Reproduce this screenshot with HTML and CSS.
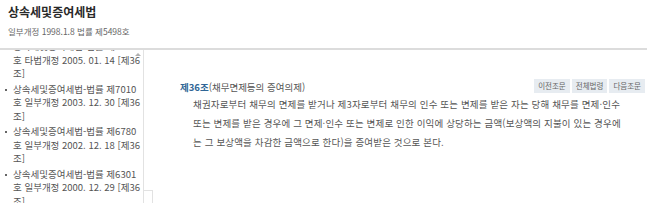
FILE: index.html
```html
<!DOCTYPE html>
<html lang="ko">
<head>
<meta charset="utf-8">
<link rel="stylesheet" href="styles.css">
</head>
<body>
<header class="head">
  <h1 class="title">상속세및증여세법</h1>
  <p class="sub">일부개정 1998.1.8 법률 제5498호</p>
</header>
<main class="main">
  <aside class="side">
    <div class="scroll">
      <ul class="hist">
        <li>상속세및증여세법-법률 제7335호 타법개정 2005. 01. 14 [제36조]</li>
        <li>상속세및증여세법-법률 제7010호 일부개정 2003. 12. 30 [제36조]</li>
        <li>상속세및증여세법-법률 제6780호 일부개정 2002. 12. 18 [제36조]</li>
        <li>상속세및증여세법-법률 제6301호 일부개정 2000. 12. 29 [제36조]</li>
      </ul>
      <span class="arrow"></span>
    </div>
  </aside>
  <section class="content">
    <div class="art-head">
      <h2 class="art-title"><span class="art-no">제36조</span>(채무면제등의 증여의제)</h2>
      <div class="btns">
        <span class="btn">이전조문</span>
        <span class="btn">전체법령</span>
        <span class="btn">다음조문</span>
      </div>
    </div>
    <p class="art-body">채권자로부터 채무의 면제를 받거나 제3자로부터 채무의 인수 또는 변제를 받은 자는 당해 채무를 면제·인수 또는 변제를 받은 경우에 그 면제·인수 또는 변제로 인한 이익에 상당하는 금액(보상액의 지불이 있는 경우에는 그 보상액을 차감한 금액으로 한다)을 증여받은 것으로 본다.</p>
  </section>
</main>
</body>
</html>
```

FILE: styles.css
```css
* { box-sizing: border-box; }
html, body { margin: 0; padding: 0; background: #fff; }
body {
  width: 647px;
  height: 203px;
  overflow: hidden;
  font-family: "Noto Sans CJK KR", "Noto Sans", sans-serif;
  color: #555;
}
.head {
  padding: 4px 8px 0 8px;
  height: 50px;
  border-bottom: 2px solid #dcdcdc;
}
.title {
  margin: 0;
  font-size: 12px;
  font-weight: bold;
  color: #2a2a2a;
  line-height: 16px;
}
.sub {
  margin: 5px 0 0 0;
  font-size: 8.5px;
  line-height: 12px;
  color: #666;
}
.main {
  display: flex;
  height: 153px;
}
.side {
  width: 152px;
  flex: none;
  position: relative;
}
.scroll {
  position: relative;
  width: 144px;
  height: 153px;
  overflow: hidden;
  border-right: 1px solid #e2e2e2;
}
.side::after {
  content: "";
  position: absolute;
  left: 143px;
  top: 140px;
  width: 9px;
  height: 13px;
  border-top: 1px solid #e2e2e2;
  border-right: 1px solid #e2e2e2;
}
.arrow {
  position: absolute;
  right: 2px;
  top: 3px;
  width: 0;
  height: 0;
  border-left: 3px solid transparent;
  border-right: 3px solid transparent;
  border-bottom: 3px solid #b0b0b0;
}
.hist {
  list-style: none;
  margin: -10px 0 0 0;
  padding: 0 1px 0 13px;
  font-size: 9.5px;
  line-height: 13.5px;
  color: #555;
  word-break: break-all;
}
.hist li {
  position: relative;
  margin-bottom: 2px;
}
.hist li::before {
  content: "";
  position: absolute;
  left: -8px;
  top: 6px;
  width: 2px;
  height: 2px;
  background: #666;
}
.content {
  flex: 1;
  padding: 29px 2px 0 28px;
}
.art-head {
  display: flex;
  justify-content: space-between;
  align-items: center;
  height: 16px;
}
.art-title {
  margin: 0;
  font-size: 9.5px;
  font-weight: normal;
  color: #555;
  line-height: 16px;
}
.art-no {
  color: #2f6696;
  font-weight: bold;
}
.btns {
  display: flex;
  gap: 2px;
  margin-top: -2px;
}
.btn {
  background: #e7ecf1;
  color: #666;
  font-size: 7.5px;
  line-height: 14px;
  padding: 0 4px;
}
.art-body {
  margin: 0 0 0 13px;
  width: 434px;
  font-size: 9.5px;
  line-height: 19px;
  letter-spacing: 0.15px;
  color: #555;
  word-break: break-all;
}
```
